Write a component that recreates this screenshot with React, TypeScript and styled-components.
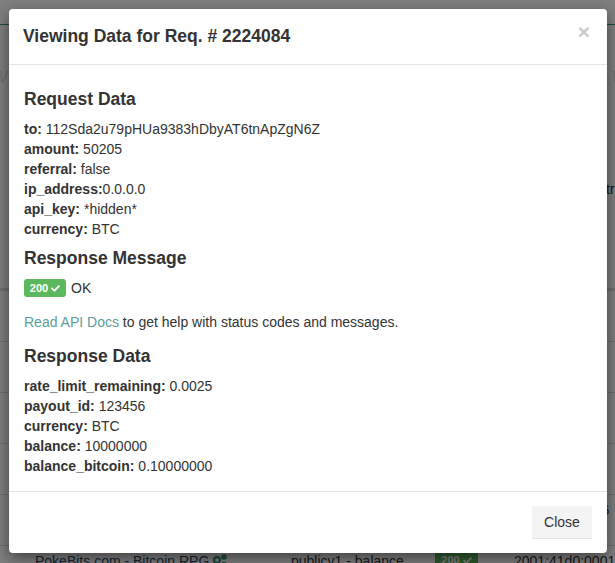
import styled, { createGlobalStyle } from 'styled-components';
import { FaCheck } from 'react-icons/fa';

const GlobalStyle = createGlobalStyle`
  html, body {
    margin: 0;
    padding: 0;
    background: #fff;
  }
  body {
    font-family: "Liberation Sans", Arial, sans-serif;
    font-size: 14px;
    line-height: 20px;
    color: #333;
  }
`;

const Page = styled.div`
  position: relative;
  width: 615px;
  height: 563px;
  overflow: hidden;
`;

/* the page that sits behind the backdrop */
const TopBar = styled.div`
  height: 24px;
  border-bottom: 1px solid #3c9a80;
`;

const Watermark = styled.div`
  display: flex;
  justify-content: space-between;
  height: 106px;
  padding: 43px 0 0;
  box-sizing: border-box;
  font-style: italic;
  font-size: 16px;
  color: #ddd;
  margin-left: -8px;
  margin-right: -12px;
`;

const SideNote = styled.div`
  height: 157px;
  padding-top: 48px;
  padding-left: 606px;
  box-sizing: border-box;
  white-space: nowrap;
  color: #1c2b3a;
`;

const TableHead = styled.div`
  height: 3px;
  background: #ddd;
`;

const Row = styled.div`
  display: grid;
  grid-template-columns: 256px 144px 79px 1fr;
  align-items: start;
  height: 51px;
  box-sizing: border-box;
  padding: 5px 0 0 35px;
  border-bottom: 1px solid #ddd;
  white-space: nowrap;
`;

const AppLink = styled.span`
  display: flex;
  align-items: center;
  gap: 3px;
  color: #2a4a6b;
`;

const Cell = styled.span`
  color: #333;
`;

const Badge = styled.span<{ $wide?: boolean }>`
  display: inline-flex;
  align-items: center;
  justify-content: center;
  gap: 3px;
  box-sizing: border-box;
  width: ${(p) => (p.$wide ? '43px' : '42px')};
  height: 18px;
  background: #5cb85c;
  border-radius: 3px;
  color: #fff;
  font-size: 11px;
  font-weight: 700;
  line-height: 1;
`;

const Backdrop = styled.div`
  position: absolute;
  inset: 0;
  background: rgba(0, 0, 0, 0.5);
`;

const Modal = styled.div`
  position: absolute;
  top: 9px;
  left: 9px;
  width: 598px;
  background: #fff;
  border-radius: 4px;
  box-shadow: 0 5px 15px rgba(0, 0, 0, 0.5);
`;

const Header = styled.div`
  display: flex;
  justify-content: space-between;
  height: 56px;
  box-sizing: border-box;
  padding: 15px 17px 0 14px;
  border-bottom: 1px solid #e5e5e5;
`;

const Title = styled.h4`
  margin: 0;
  font-size: 17.5px;
  font-weight: 700;
  line-height: 24px;
  color: #333;
`;

const CloseX = styled.span`
  margin-top: -3px;
  font-size: 21px;
  font-weight: 700;
  line-height: 21px;
  color: #ccc;
`;

const Body = styled.div`
  padding: 15px 15px 15px;
`;

const SectionTitle = styled.h4`
  margin: 9px 0 10px;
  font-size: 17.5px;
  font-weight: 700;
  line-height: 20px;
  color: #333;
`;

const DataLine = styled.div`
  height: 20px;
  white-space: nowrap;
  color: #333;

  b {
    font-weight: 700;
  }
`;

const StatusLine = styled.div`
  display: flex;
  align-items: center;
  gap: 5px;
  height: 20px;
  margin-bottom: 14px;
`;

const HelpText = styled.p`
  margin: 0 0 14px;
  color: #333;

  a {
    color: #5b9f9b;
    text-decoration: none;
  }
`;

const Footer = styled.div`
  display: flex;
  justify-content: flex-end;
  padding: 14px 15px;
  border-top: 1px solid #e5e5e5;
`;

const CloseButton = styled.button`
  width: 60px;
  height: 33px;
  padding: 0;
  border: 0;
  border-bottom: 1px solid #e5e5e5;
  background: #f4f4f4;
  color: #333;
  font-family: inherit;
  font-size: 14px;
`;

const requestData = [
  ['to:', ' 112Sda2u79pHUa9383hDbyAT6tnApZgN6Z'],
  ['amount:', ' 50205'],
  ['referral:', ' false'],
  ['ip_address:', '0.0.0.0'],
  ['api_key:', ' *hidden*'],
  ['currency:', ' BTC'],
];

const responseData = [
  ['rate_limit_remaining:', ' 0.0025'],
  ['payout_id:', ' 123456'],
  ['currency:', ' BTC'],
  ['balance:', ' 10000000'],
  ['balance_bitcoin:', ' 0.10000000'],
];

const Gears = () => (
  <svg width="15" height="14" viewBox="0 0 15 14" fill="none" stroke="#3c9a80" strokeWidth="2.4">
    <circle cx="5" cy="6" r="3" />
    <circle cx="12" cy="11" r="2" />
    <circle cx="12" cy="3" r="1.6" />
  </svg>
);

const DataLines = ({ lines }: { lines: string[][] }) => (
  <>
    {lines.map(([key, value]) => (
      <DataLine key={key}>
        <b>{key}</b>
        {value}
      </DataLine>
    ))}
  </>
);

const App = () => {
  return (
    <Page>
      <GlobalStyle />
      <TopBar />
      <Watermark>
        <span>W</span>
        <span>W</span>
      </Watermark>
      <SideNote>tr</SideNote>
      <TableHead />
      <Row />
      <Row />
      <Row />
      <Row />
      <Row>
        <span />
        <span />
        <span />
        <Cell>185.111.22.136</Cell>
      </Row>
      <Row>
        <AppLink>
          PokeBits.com - Bitcoin RPG <Gears />
        </AppLink>
        <Cell>publicv1 - balance</Cell>
        <Badge $wide>
          200 <FaCheck size={9} />
        </Badge>
        <Cell>2001:41d0:0001</Cell>
      </Row>
      <Backdrop />
      <Modal>
        <Header>
          <Title>Viewing Data for Req. # 2224084</Title>
          <CloseX>×</CloseX>
        </Header>
        <Body>
          <SectionTitle>Request Data</SectionTitle>
          <DataLines lines={requestData} />
          <SectionTitle>Response Message</SectionTitle>
          <StatusLine>
            <Badge>
              200 <FaCheck size={9} />
            </Badge>
            OK
          </StatusLine>
          <HelpText>
            <a href="#docs">Read API Docs</a> to get help with status codes and messages.
          </HelpText>
          <SectionTitle>Response Data</SectionTitle>
          <DataLines lines={responseData} />
        </Body>
        <Footer>
          <CloseButton>Close</CloseButton>
        </Footer>
      </Modal>
    </Page>
  );
};

export default App;
